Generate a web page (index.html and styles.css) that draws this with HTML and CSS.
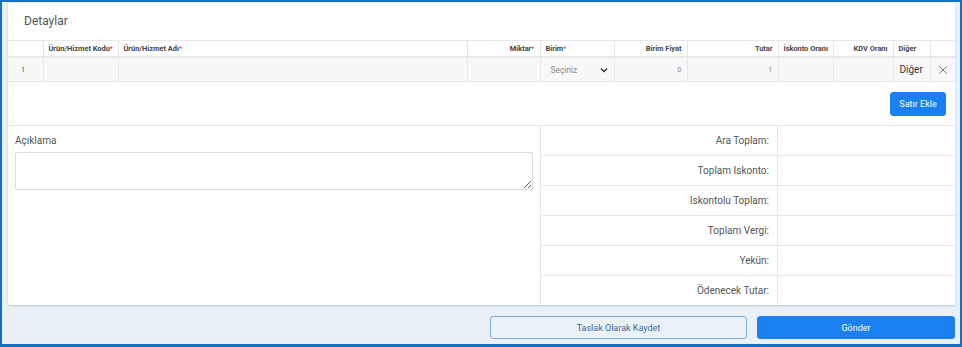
FILE: index.html
```html
<!DOCTYPE html>
<html lang="tr">
<head>
    <meta charset="UTF-8">
    <meta name="viewport" content="width=device-width, initial-scale=1.0">
    <title>Detaylar</title>
    <link rel="stylesheet" href="styles.css">
</head>
<body>

<div class="frame">
    <div class="card">
        <div class="card-title">Detaylar</div>

        <table class="items">
            <colgroup>
                <col style="width: 35px">
                <col style="width: 75px">
                <col style="width: 349px">
                <col style="width: 73px">
                <col style="width: 74px">
                <col style="width: 73px">
                <col style="width: 91px">
                <col style="width: 55px">
                <col style="width: 60px">
                <col style="width: 37px">
                <col style="width: 25px">
            </colgroup>
            <thead>
                <tr>
                    <th></th>
                    <th>Ürün/Hizmet Kodu<span class="req">*</span></th>
                    <th>Ürün/Hizmet Adı<span class="req">*</span></th>
                    <th class="right">Miktar<span class="req">*</span></th>
                    <th>Birim<span class="req">*</span></th>
                    <th class="right">Birim Fiyat</th>
                    <th class="right">Tutar</th>
                    <th>İskonto Oranı</th>
                    <th class="right">KDV Oranı</th>
                    <th>Diğer</th>
                    <th></th>
                </tr>
            </thead>
            <tbody>
                <tr>
                    <td class="num">1</td>
                    <td></td>
                    <td></td>
                    <td></td>
                    <td>
                        <div class="select">
                            <span>Seçiniz</span>
                            <svg width="8" height="6" viewBox="0 0 8 6"><path d="M1 1.5 L4 4.5 L7 1.5" fill="none" stroke="#333" stroke-width="1.4"/></svg>
                        </div>
                    </td>
                    <td class="right muted">0</td>
                    <td class="right muted">1</td>
                    <td></td>
                    <td></td>
                    <td class="other">Diğer</td>
                    <td class="remove">
                        <svg width="10" height="10" viewBox="0 0 10 10"><path d="M1 1 L9 9 M9 1 L1 9" stroke="#777" stroke-width="0.9"/></svg>
                    </td>
                </tr>
            </tbody>
        </table>

        <div class="add-row">
            <button class="btn-primary small">Satır Ekle</button>
        </div>

        <div class="summary">
            <div class="note">
                <div class="note-label">Açıklama</div>
                <textarea class="note-input"></textarea>
            </div>
            <div class="totals">
                <div class="total-row"><div class="total-label">Ara Toplam:</div><div class="total-value"></div></div>
                <div class="total-row"><div class="total-label">Toplam Iskonto:</div><div class="total-value"></div></div>
                <div class="total-row"><div class="total-label">Iskontolu Toplam:</div><div class="total-value"></div></div>
                <div class="total-row"><div class="total-label">Toplam Vergi:</div><div class="total-value"></div></div>
                <div class="total-row"><div class="total-label">Yekün:</div><div class="total-value"></div></div>
                <div class="total-row"><div class="total-label">Ödenecek Tutar:</div><div class="total-value"></div></div>
            </div>
        </div>
    </div>

    <div class="actions">
        <button class="btn-outline">Taslak Olarak Kaydet</button>
        <button class="btn-primary wide">Gönder</button>
    </div>
</div>

</body>
</html>
```

FILE: styles.css
```css
html, body {
    margin: 0;
    padding: 0;
}
body {
    font-family: Roboto, "Liberation Sans", Arial, sans-serif;
    color: #444;
}
.frame {
    box-sizing: border-box;
    width: 962px;
    height: 347px;
    border: 2px solid #1670c4;
    border-bottom-width: 3px;
    background-color: #e9f0f7;
    padding: 1px 5px 0 6px;
}
.card {
    background-color: #ffffff;
    border-radius: 2px;
    box-shadow: 0 1px 2px rgba(0, 0, 0, 0.18);
    height: 302px;
    display: flex;
    flex-direction: column;
}
.card-title {
    height: 37px;
    box-sizing: border-box;
    padding: 11px 0 0 16px;
    font-size: 12px;
    color: #555;
}
.items {
    border-collapse: collapse;
    table-layout: fixed;
    width: 947px;
}
.items th, .items td {
    border: 1px solid #e8e8e8;
    padding: 0 5px;
    text-align: left;
    overflow: hidden;
    white-space: nowrap;
    line-height: 10px;
}
.items tr > :first-child {
    border-left: none;
}
.items tr > :last-child {
    border-right: none;
}
.items th {
    height: 15px;
    font-size: 7.4px;
    font-weight: bold;
    color: #444;
    border-bottom: 2px solid #e8e8e8;
}
.items td {
    height: 23px;
    background-color: #f8f8f8;
    font-size: 7.4px;
    color: #555;
}
.items .right {
    text-align: right;
}
.items .muted {
    color: #888;
}
.req {
    color: #e04040;
    font-weight: normal;
}
.num {
    padding-left: 13px !important;
}
.select {
    display: flex;
    justify-content: space-between;
    align-items: center;
    padding: 0 1px 0 5px;
    color: #888;
    font-size: 8.4px;
}
.select svg {
    display: block;
}
.other {
    font-size: 10px !important;
    color: #333 !important;
    padding: 0 0 0 6px !important;
}
.remove {
    text-align: center !important;
    padding: 0 !important;
}
.remove svg {
    display: block;
    margin: 0 auto;
}
.add-row {
    height: 44px;
    box-sizing: border-box;
    display: flex;
    justify-content: flex-end;
    align-items: flex-start;
    padding: 10px 9px 0 0;
    border-bottom: 1px solid #e8e8e8;
}
button {
    font-family: Roboto, "Liberation Sans", Arial, sans-serif;
    cursor: pointer;
    border-radius: 3px;
}
.btn-primary {
    background-color: #1a7ff0;
    border: 1px solid #1a7ff0;
    color: #ffffff;
}
.btn-primary.small {
    width: 56px;
    height: 24px;
    font-size: 9px;
    padding: 0;
}
.summary {
    flex: 1;
    display: flex;
}
.note {
    width: 533px;
    box-sizing: border-box;
    padding: 9px 8px 0 7px;
    border-right: 1px solid #e8e8e8;
}
.note-label {
    font-size: 10px;
    color: #555;
    margin-bottom: 6px;
}
.note-input {
    display: block;
    box-sizing: border-box;
    width: 518px;
    height: 38px;
    border: 1px solid #dcdcdc;
    border-radius: 2px;
    resize: vertical;
    margin: 0;
}
.totals {
    flex: 1;
    display: flex;
    flex-direction: column;
}
.total-row {
    flex: 1;
    display: flex;
    border-bottom: 1px solid #e8e8e8;
}
.total-row:last-child {
    border-bottom: none;
}
.total-label {
    width: 237px;
    box-sizing: border-box;
    display: flex;
    align-items: center;
    justify-content: flex-end;
    padding-right: 8px;
    font-size: 10px;
    color: #555;
    border-right: 1px solid #e8e8e8;
}
.total-value {
    flex: 1;
}
.actions {
    display: flex;
    justify-content: flex-end;
    gap: 10px;
    padding-top: 11px;
}
.btn-outline {
    width: 257px;
    height: 23px;
    background-color: #eaf1f8;
    border: 1px solid #7ea9d1;
    color: #3d6d9e;
    font-size: 9px;
}
.btn-primary.wide {
    width: 198px;
    height: 23px;
    font-size: 9px;
}
```
